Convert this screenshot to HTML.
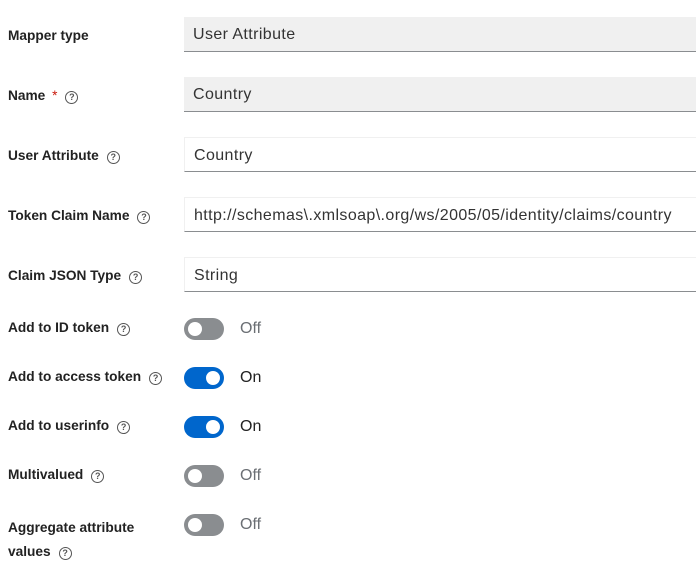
<!DOCTYPE html>
<html><head><style>
body{margin:0;width:696px;height:570px;background:#fff;font-family:"Liberation Sans",sans-serif;position:relative;overflow:hidden}
.l{position:absolute;left:8px;font-size:13.7px;font-weight:bold;color:#222;line-height:16px;margin-top:1px}
.q{display:inline-block;width:11px;height:11px;border:1.3px solid #555;border-radius:50%;font-size:9px;line-height:11px;text-align:center;font-weight:bold;color:#555;margin-left:8px;vertical-align:0px}
.in{position:absolute;left:184px;width:530px;height:35px;box-sizing:border-box;font-size:16px;letter-spacing:0.4px;color:#333;padding-left:9px;line-height:35px;border-bottom:1px solid #8a8d90}
.dis{background:#f0f0f0}
.en{border:1px solid #f0f0f0;border-bottom:1px solid #8a8d90}
.t{position:absolute;left:184px;width:40px;height:22px;border-radius:11px;background:#8a8d90}
.t::after{content:"";position:absolute;top:4px;left:4px;width:14px;height:14px;border-radius:50%;background:#fff}
.t.on{background:#0066cc}.t.on::after{left:22px}
.s{position:absolute;left:240px;font-size:16px;line-height:18px}
.off{color:#6a6e73}.onl{color:#222}
</style></head><body>
<div class="l" style="top:27px">Mapper type</div>
<div class="in dis" style="top:17px">User Attribute</div>
<div class="l" style="top:87px">Name <span style="color:#c9190b;font-weight:normal;margin-left:3px">*</span><span class="q">?</span></div>
<div class="in dis" style="top:77px">Country</div>
<div class="l" style="top:147px">User Attribute<span class="q">?</span></div>
<div class="in en" style="top:137px">Country</div>
<div class="l" style="top:207px">Token Claim Name<span class="q">?</span></div>
<div class="in en" style="top:197px">http://schemas\.xmlsoap\.org/ws/2005/05/identity/claims/country</div>
<div class="l" style="top:267px">Claim JSON Type<span class="q">?</span></div>
<div class="in en" style="top:257px">String</div>
<div class="l" style="top:319px">Add to ID token<span class="q">?</span></div>
<div class="t" style="top:318px"></div><div class="s off" style="top:320px">Off</div>
<div class="l" style="top:368px">Add to access token<span class="q">?</span></div>
<div class="t on" style="top:367px"></div><div class="s onl" style="top:369px">On</div>
<div class="l" style="top:417px">Add to userinfo<span class="q">?</span></div>
<div class="t on" style="top:416px"></div><div class="s onl" style="top:418px">On</div>
<div class="l" style="top:466px">Multivalued<span class="q">?</span></div>
<div class="t" style="top:465px"></div><div class="s off" style="top:467px">Off</div>
<div class="l" style="top:515px;line-height:24px">Aggregate attribute<br>values<span class="q">?</span></div>
<div class="t" style="top:514px"></div><div class="s off" style="top:516px">Off</div>
</body></html>
